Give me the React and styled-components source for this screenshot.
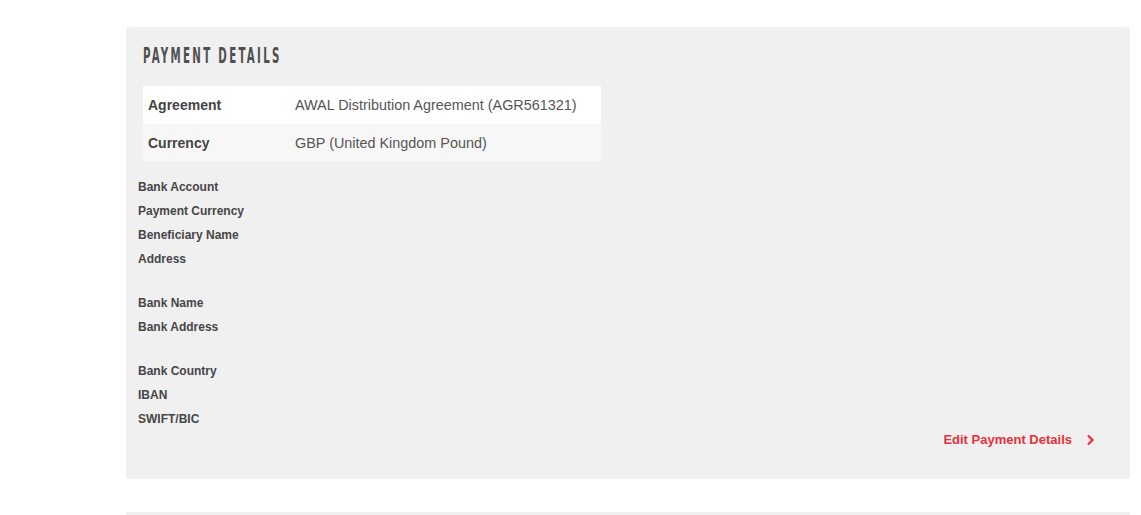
import React from "react";
import styled, { createGlobalStyle } from "styled-components";

const GlobalStyle = createGlobalStyle`
  body {
    margin: 0;
    background: #ffffff;
    font-family: "Liberation Sans", Arial, sans-serif;
  }
`;

const Page = styled.div`
  padding: 27px 11px 0 126px;
  display: flex;
  flex-direction: column;
  gap: 33px;
`;

const Panel = styled.section`
  background: #f0f0f0;
  border-radius: 3px;
  padding: 17px 35px 32px 12px;
  min-height: ${props => props.minHeight || 0}px;
  box-sizing: border-box;
`;

const Title = styled.h2`
  margin: 0 0 20px 5px;
  font-family: "DejaVu Sans Condensed", "Liberation Sans Narrow", sans-serif;
  font-weight: bold;
  font-size: 19px;
  letter-spacing: 3.8px;
  line-height: 22px;
  color: #4f4f4f;
  white-space: nowrap;
  transform: scale(0.6, 1.08);
  transform-origin: left center;
`;

const Table = styled.div`
  width: 458px;
  margin-left: 5px;
  margin-bottom: 14px;
`;

const TableRow = styled.div`
  display: grid;
  grid-template-columns: 147px 1fr;
  align-items: center;
  height: ${props => (props.alt ? 37 : 38)}px;
  padding-left: 5px;
  background: ${props => (props.alt ? "#f7f7f7" : "#ffffff")};
  font-size: 14px;
`;

const TableLabel = styled.span`
  font-weight: bold;
  color: #444444;
`;

const TableValue = styled.span`
  font-size: 14.4px;
  color: #555555;
`;

const Fields = styled.div`
  display: flex;
  flex-direction: column;
`;

const Field = styled.div`
  height: 24px;
  line-height: 24px;
  font-size: 12px;
  font-weight: bold;
  color: #464646;
  margin-bottom: ${props => (props.gap ? 20 : 0)}px;
`;

const Footer = styled.div`
  display: flex;
  justify-content: flex-end;
  margin-top: 1px;
`;

const EditLink = styled.a`
  display: flex;
  align-items: center;
  gap: 14px;
  font-size: 13px;
  font-weight: bold;
  color: #ec2f3c;
  text-decoration: none;
  cursor: pointer;
`;

const fields = [
  { label: "Bank Account" },
  { label: "Payment Currency" },
  { label: "Beneficiary Name" },
  { label: "Address", gap: true },
  { label: "Bank Name" },
  { label: "Bank Address", gap: true },
  { label: "Bank Country" },
  { label: "IBAN" },
  { label: "SWIFT/BIC" }
];

const Chevron = () => (
  <svg width="9" height="12" viewBox="0 0 9 12">
    <path d="M2 1.5 L6.5 6 L2 10.5" fill="none" stroke="#ec2f3c" strokeWidth="2.2" />
  </svg>
);

export default function App() {
  return (
    <>
      <GlobalStyle />
      <Page>
        <Panel>
          <Title>PAYMENT DETAILS</Title>
          <Table>
            <TableRow>
              <TableLabel>Agreement</TableLabel>
              <TableValue>AWAL Distribution Agreement (AGR561321)</TableValue>
            </TableRow>
            <TableRow alt>
              <TableLabel>Currency</TableLabel>
              <TableValue>GBP (United Kingdom Pound)</TableValue>
            </TableRow>
          </Table>
          <Fields>
            {fields.map(f => (
              <Field key={f.label} gap={f.gap}>
                {f.label}
              </Field>
            ))}
          </Fields>
          <Footer>
            <EditLink>
              Edit Payment Details
              <Chevron />
            </EditLink>
          </Footer>
        </Panel>
        <Panel minHeight={60} />
      </Page>
    </>
  );
}
